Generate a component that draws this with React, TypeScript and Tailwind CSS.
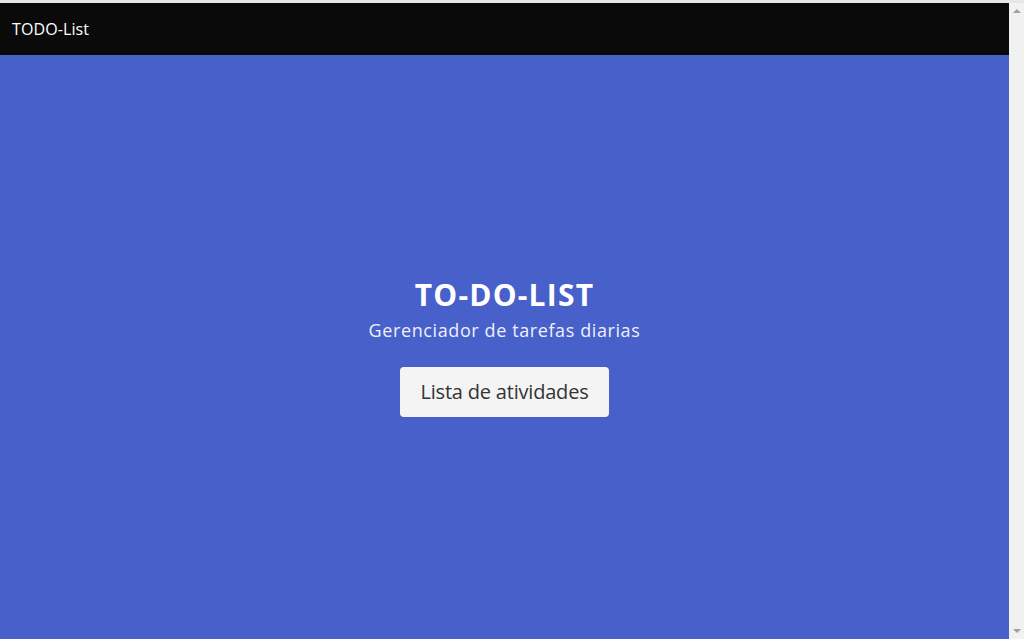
import React from "react";

const Scrollbar: React.FC = () => (
  <div className="w-[15px] bg-[#f1f1f1] flex flex-col justify-between items-center pt-[6px] pb-[6px]">
    <svg width="8" height="4" viewBox="0 0 8 4" className="block">
      <polygon points="4,0 8,4 0,4" fill="#a0a0a0" />
    </svg>
    <svg width="8" height="4" viewBox="0 0 8 4" className="block">
      <polygon points="0,0 8,0 4,4" fill="#a0a0a0" />
    </svg>
  </div>
);

export default function App() {
  return (
    <div
      className="h-screen flex flex-col bg-[#e8e8e8] overflow-hidden"
      style={{ fontFamily: '"Open Sans", "Noto Sans", sans-serif' }}
    >
      <div className="h-[3px] bg-[#e6e6e6]" />
      <div className="flex flex-1 min-h-0">
        <div className="flex-1 flex flex-col">
          {/* Navbar */}
          <nav className="h-[52px] bg-[#0a0a0a] flex items-center px-3">
            <span className="text-white text-[16px] tracking-[0.1px]">TODO-List</span>
          </nav>

          {/* Hero */}
          <main className="flex-1 bg-[#4860c9] flex flex-col items-center justify-center">
            <h1 className="text-white text-[30px] font-bold leading-[36px] tracking-[1.2px]">
              TO-DO-LIST
            </h1>
            <p className="text-[#eef0fb] text-[18px] leading-[26px] mt-[4px] tracking-[0.6px]">
              Gerenciador de tarefas diarias
            </p>
            <button className="mt-[24px] w-[209px] h-[50px] rounded-[4px] bg-[#f4f4f4] text-[#333333] text-[20px] tracking-[-0.2px]">
              Lista de atividades
            </button>
          </main>
        </div>
        <Scrollbar />
      </div>
    </div>
  );
}
